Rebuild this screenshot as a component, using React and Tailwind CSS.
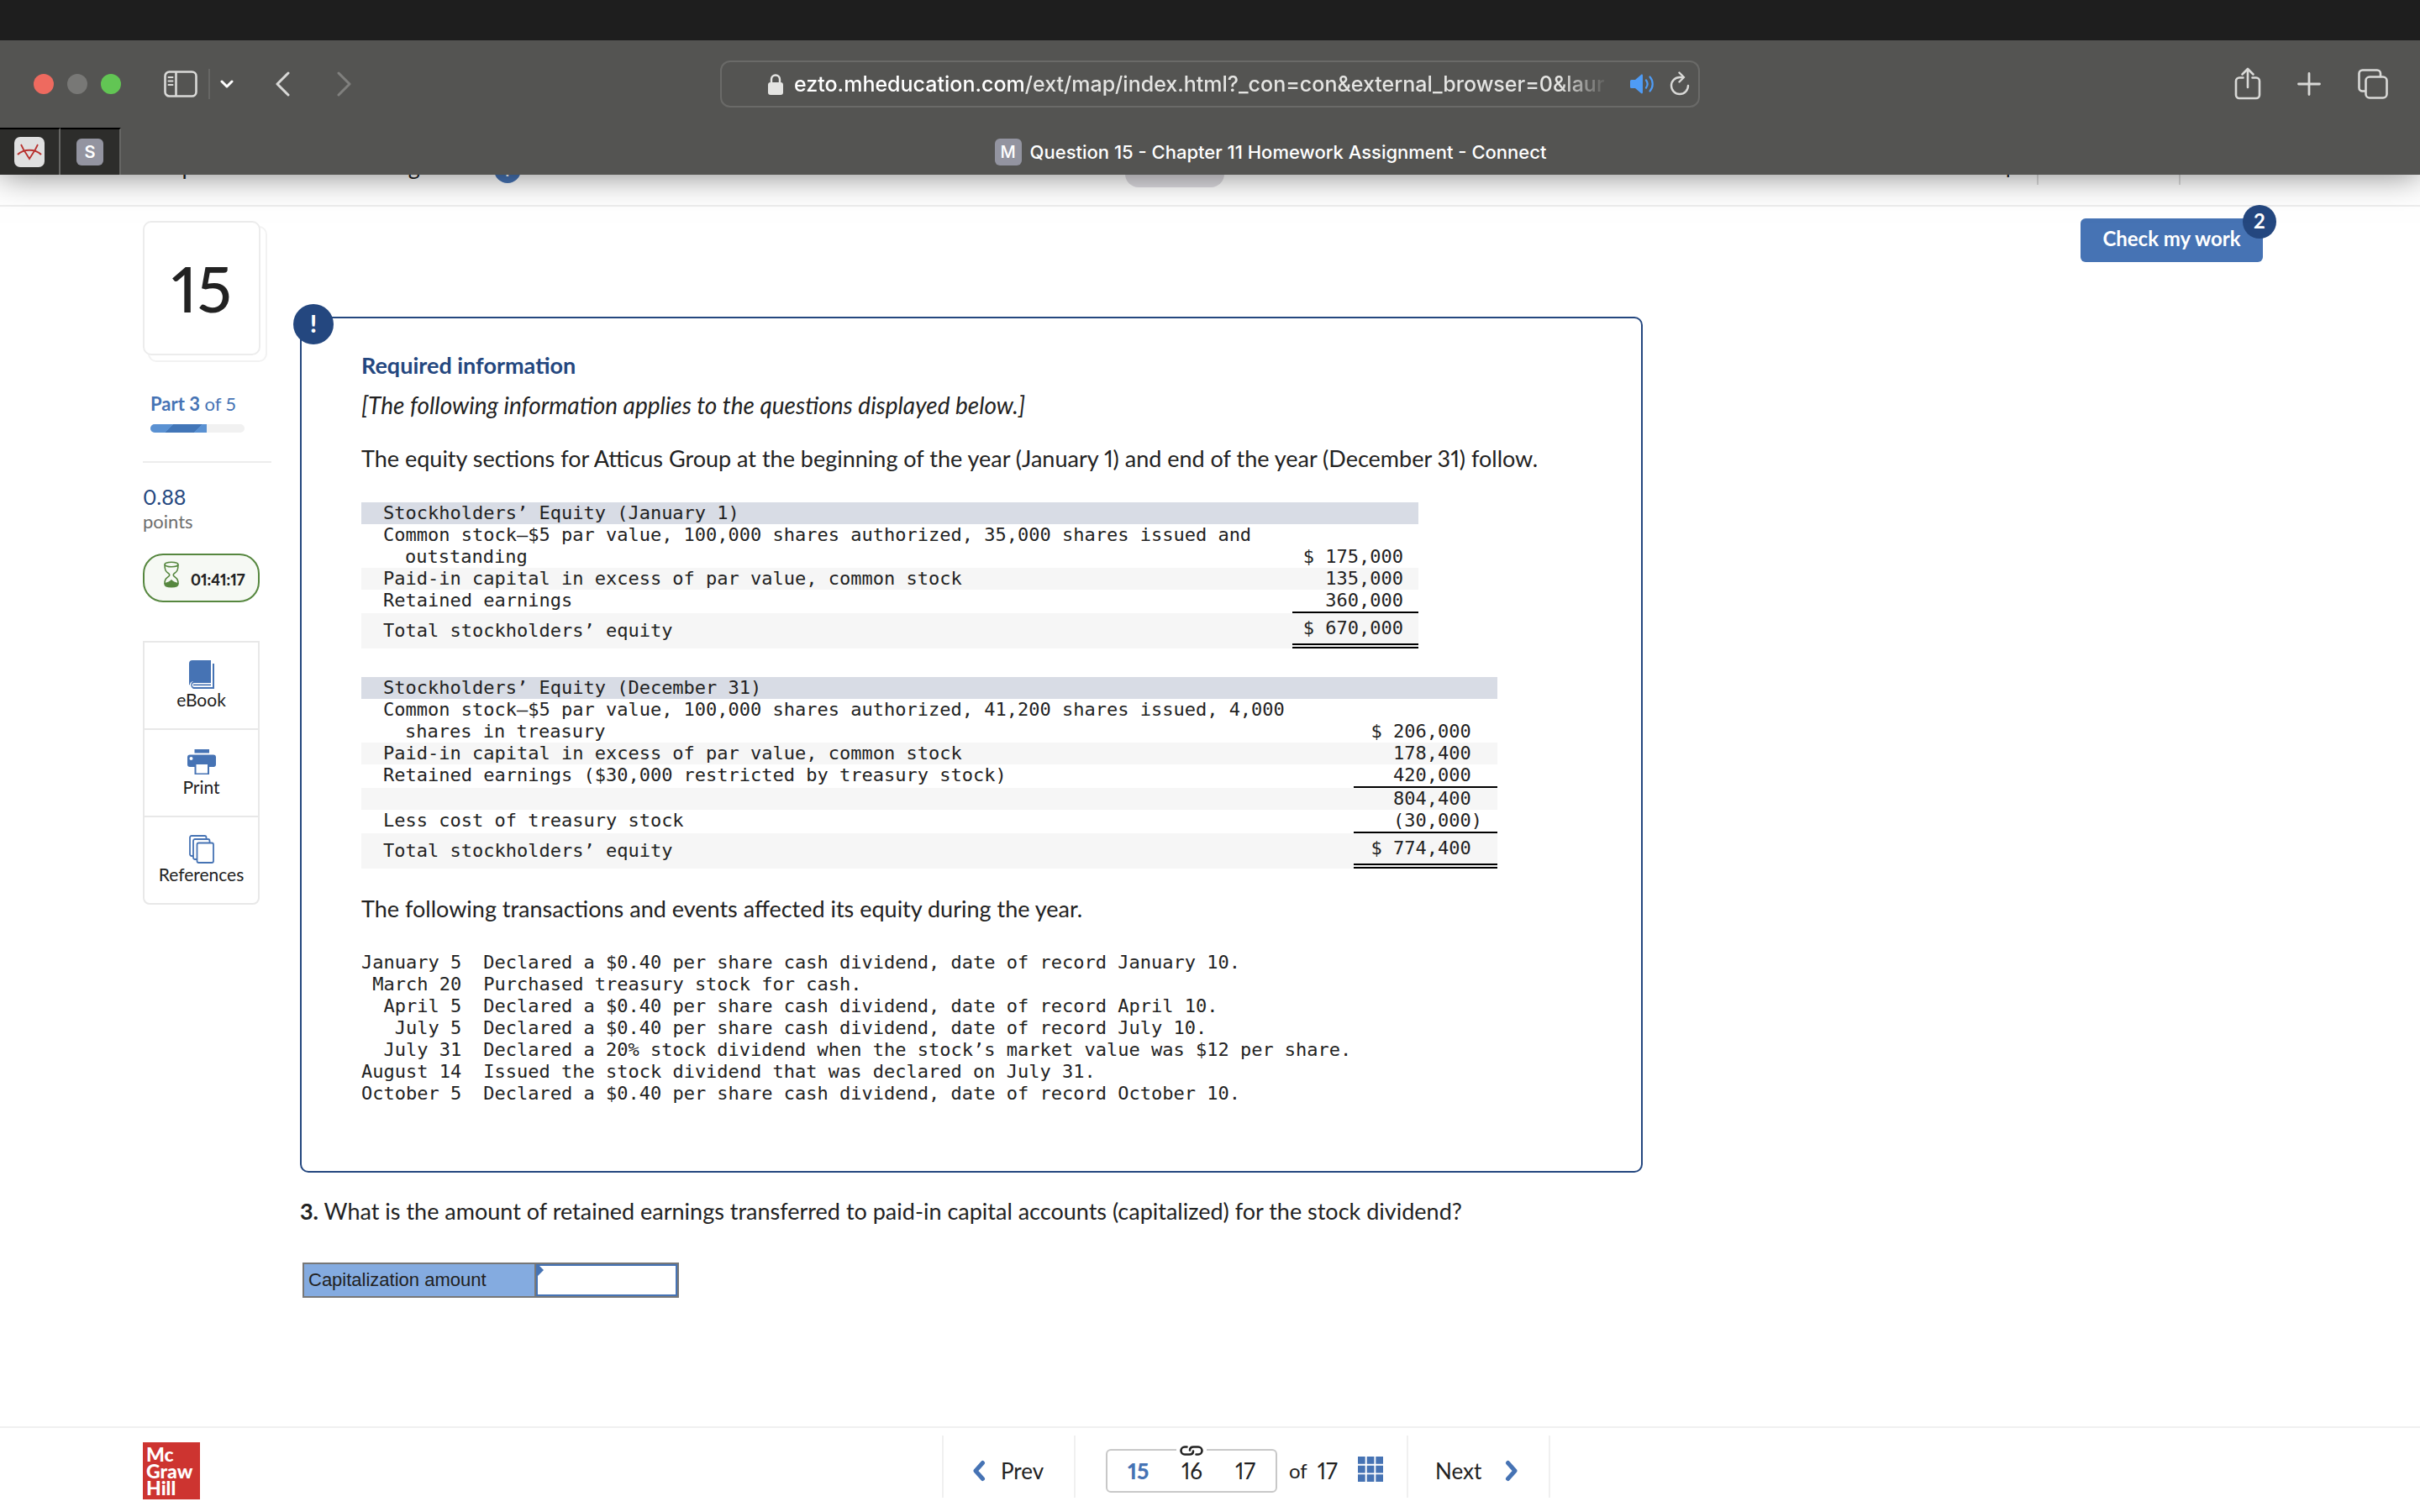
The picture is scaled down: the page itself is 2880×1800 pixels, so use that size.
import { useState } from "react";

const januaryRows = [
  { label: "Common stock—$5 par value, 100,000 shares authorized, 35,000 shares issued and outstanding", amount: "$ 175,000" },
  { label: "Paid-in capital in excess of par value, common stock", amount: "135,000", shaded: true },
  { label: "Retained earnings", amount: "360,000", rule: true },
  { label: "Total stockholders’ equity", amount: "$ 670,000", shaded: true, total: true },
];

// trailing nbsp keeps the digits lined up with the (30,000) row
const decemberRows = [
  { label: "Common stock—$5 par value, 100,000 shares authorized, 41,200 shares issued, 4,000 shares in treasury", amount: "$ 206,000\u00a0" },
  { label: "Paid-in capital in excess of par value, common stock", amount: "178,400\u00a0", shaded: true },
  { label: "Retained earnings ($30,000 restricted by treasury stock)", amount: "420,000\u00a0", rule: true },
  { label: "", amount: "804,400\u00a0", shaded: true },
  { label: "Less cost of treasury stock", amount: "(30,000)", rule: true },
  { label: "Total stockholders’ equity", amount: "$ 774,400\u00a0", shaded: true, total: true },
];

const transactions = [
  ["January 5", "Declared a $0.40 per share cash dividend, date of record January 10."],
  ["March 20", "Purchased treasury stock for cash."],
  ["April 5", "Declared a $0.40 per share cash dividend, date of record April 10."],
  ["July 5", "Declared a $0.40 per share cash dividend, date of record July 10."],
  ["July 31", "Declared a 20% stock dividend when the stock’s market value was $12 per share."],
  ["August 14", "Issued the stock dividend that was declared on July 31."],
  ["October 5", "Declared a $0.40 per share cash dividend, date of record October 10."],
];

const BrowserBar = () => (
  <div className="relative z-10 bg-[#545452] font-['Inter',sans-serif] text-white shadow-[0_0_38px_rgba(0,0,0,0.5)]">
    <div className="h-12 bg-[#1e1e1e]" />
    <div className="grid h-[104px] grid-cols-[1fr_1166px_1fr] items-center">
      <div className="flex items-center pl-10 text-[#d9d9d7]">
        <div className="flex gap-4">
          <span className="size-6 rounded-full bg-[#ee6a5f]" />
          <span className="size-6 rounded-full bg-[#787876]" />
          <span className="size-6 rounded-full bg-[#62c554]" />
        </div>
        <button aria-label="Show sidebar" className="ml-[51px]">
          <svg width="40" height="32" viewBox="0 0 40 32" fill="none" stroke="currentColor" strokeWidth="2.6">
            <rect x="1.5" y="1.5" width="37" height="29" rx="5" />
            <path d="M14.5 2v28" />
            <path d="M5.5 8h5M5.5 12.500h5M5.5 17h5" strokeWidth="2" strokeLinecap="round" />
          </svg>
        </button>
        <span className="ml-[13px] h-9 w-0.5 bg-[#666664]" />
        <button aria-label="Sidebar options" className="ml-3">
          <svg width="16" height="10" viewBox="0 0 16 10" fill="none" stroke="white" strokeWidth="3" strokeLinecap="round" strokeLinejoin="round">
            <path d="M2 2l6 6 6-6" />
          </svg>
        </button>
        <button aria-label="Back" className="ml-12">
          <svg width="20" height="30" viewBox="0 0 20 30" fill="none" stroke="currentColor" strokeWidth="3" strokeLinecap="round" strokeLinejoin="round">
            <path d="M17 2L4 15l13 13" />
          </svg>
        </button>
        <button aria-label="Forward" className="ml-[54px] text-[#80807e]">
          <svg width="20" height="30" viewBox="0 0 20 30" fill="none" stroke="currentColor" strokeWidth="3" strokeLinecap="round" strokeLinejoin="round">
            <path d="M3 2l13 13L3 28" />
          </svg>
        </button>
      </div>

      <div className="flex h-14 items-center rounded-xl border-2 border-[#6a6a68] pr-2.5 pl-[54px]">
        <svg width="20" height="26" viewBox="0 0 20 26" fill="#e4e4e2">
          <rect x="1" y="11" width="18" height="15" rx="3" />
          <path d="M5 12V7.500a5 5 0 0110 0V12" fill="none" stroke="#e4e4e2" strokeWidth="2.400" />
        </svg>
        <p className="ml-3 flex-1 overflow-hidden text-[25px] leading-9 font-medium whitespace-nowrap text-[#e4e4e2] [mask-image:linear-gradient(to_right,black_94%,transparent)]">
          <span className="text-white">ezto.mheducation.com</span>
          /ext/map/index.html?_con=con&amp;external_browser=0&amp;laur
        </p>
        <button aria-label="Mute tab" className="ml-6">
          <svg width="32" height="24" viewBox="0 0 32 24" fill="#4f9cf6">
            <path d="M1 8.500a1.500 1.500 0 011.500-1.500H7l7-6c1-.8 2-.3 2 1v20c0 1.300-1 1.800-2 1l-7-6H2.500A1.500 1.500 0 011 15.500z" />
            <path d="M20 7.500c2 2.700 2 6.300 0 9M24.500 3.500c4.300 5 4.300 12 0 17" fill="none" stroke="#4f9cf6" strokeWidth="2.200" strokeLinecap="round" />
          </svg>
        </button>
        <button aria-label="Reload" className="ml-4">
          <svg width="24" height="30" viewBox="0 0 24 30" fill="none" stroke="#d9d9d7" strokeWidth="2.400" strokeLinecap="round" strokeLinejoin="round">
            <path d="M22 17a10 10 0 11-10-10h4" />
            <path d="M11.500 1.500L17 7l-5.500 5.500" />
          </svg>
        </button>
      </div>

      <div className="flex items-center justify-end pr-[38px] text-[#d9d9d7]">
        <button aria-label="Share">
          <svg width="32" height="40" viewBox="0 0 32 40" fill="none" stroke="currentColor" strokeWidth="2.600" strokeLinecap="round" strokeLinejoin="round">
            <path d="M10.500 12.500H6a4 4 0 00-4 4V33a4 4 0 004 4h20a4 4 0 004-4V16.500a4 4 0 00-4-4h-4.500" />
            <path d="M16 24V2.500M9.500 8.500L16 2l6.500 6.500" />
          </svg>
        </button>
        <button aria-label="New tab" className="ml-[43px]">
          <svg width="28" height="28" viewBox="0 0 28 28" fill="none" stroke="currentColor" strokeWidth="2.800" strokeLinecap="round">
            <path d="M14 1.500v25M1.500 14h25" />
          </svg>
        </button>
        <button aria-label="Show all tabs" className="ml-11">
          <svg width="36" height="36" viewBox="0 0 36 36" fill="none" stroke="currentColor" strokeWidth="2.600" strokeLinejoin="round">
            <rect x="9.500" y="9.500" width="25" height="25" rx="4.500" />
            <path d="M9 26.500H5.500a4 4 0 01-4-4v-17a4 4 0 014-4h17.500a4 4 0 014 4V9" />
          </svg>
        </button>
      </div>
    </div>

    <div className="flex h-14">
      <button aria-label="Pinned tab" className="flex w-[72px] items-center justify-center border-t-2 border-r-2 border-t-black border-r-[#666664] bg-[#2d2d2b]">
        <svg width="36" height="36" viewBox="0 0 36 36" fill="none" stroke="#b8322f" strokeWidth="1.800">
          <rect width="36" height="36" rx="7" fill="#e0e0e0" stroke="none" />
          <path d="M8 9l3 6 7 11 7-11 3-6" />
          <path d="M4 21c7-7 21-7 28 0" strokeWidth="2.200" />
        </svg>
      </button>
      <button aria-label="Pinned tab S" className="flex w-[72px] items-center justify-center border-t-2 border-r-2 border-t-black border-r-[#666664] bg-[#2d2d2b]">
        <span className="flex size-8 items-center justify-center rounded-md bg-[#9394a0] text-xl font-semibold">S</span>
      </button>
      <div className="flex flex-1 items-center justify-center gap-2.5 pt-0.5 text-[22px] font-medium">
        <span className="flex size-8 items-center justify-center rounded-md bg-[#9394a0] text-xl">M</span>
        Question 15 - Chapter 11 Homework Assignment - Connect
      </div>
    </div>
  </div>
);

// scrolled mostly under the browser bar
const AssignmentHeader = () => (
  <header className="-mt-[62px] flex h-[100px] border-b-2 border-[#ededed] bg-white pr-[187px] pl-[170px] text-[27px] leading-8">
    <div className="flex w-[1169px] items-start gap-3 pt-9">
      <span>Chapter 11 Homework Assignment</span>
      <span className="mt-1 flex size-8 items-center justify-center rounded-full bg-[#4673b4] text-xl font-bold text-white">i</span>
    </div>
    <span className="mt-5 h-[57px] w-[118px] rounded-2xl bg-[#dddbe0]" />
    <div className="flex flex-1 items-start justify-end pt-9 text-2xl">
      <span className="pr-6">Help</span>
      <span className="h-[38px] border-x-2 border-[#dddddd] px-6">Save &amp; Exit</span>
      <span className="pl-6">Submit</span>
    </div>
  </header>
);

const SideLink = ({ label, children, last }) => (
  <a
    href="#"
    className={`flex flex-col items-center border-2 border-[#e8e8e8] pt-5 text-[21px] leading-6 ${last ? "h-[106px] rounded-b-lg" : "h-[104px] border-b-0"}`}
  >
    <span className="flex h-9 items-center text-[#4673b4]">{children}</span>
    <span>{label}</span>
  </a>
);

const Sidebar = () => (
  <aside className="w-[153px] shrink-0">
    <div className="relative mr-[13px] h-40">
      <div className="absolute top-1.5 left-1.5 h-[162px] w-[142px] rounded-[10px] border-2 border-[#f2f2f2]" />
      <div className="relative flex h-40 items-center justify-center rounded-[10px] border-2 border-[#ececec] bg-white text-[76px] font-medium">
        15
      </div>
    </div>
    <div className="px-[9px] pt-[42px] text-[22px] leading-8 text-[#4673b4]">
      <strong>Part 3</strong> of 5
      <div className="mt-2 h-2.5 w-28 overflow-hidden rounded-full bg-[#f1f1f1]">
        <div className="h-full w-3/5 bg-[linear-gradient(135deg,#5a91d2_36%,#4276b8_36%,#4276b8_80%,#5a91d2_80%)]" />
      </div>
    </div>
    <hr className="mt-[34px] border-t-2 border-[#ececec]" />
    <p className="mt-6 text-[25px] leading-8 text-[#24477f]">0.88</p>
    <p className="text-[22px] leading-7 text-[#6e6e6e]">points</p>
    <div className="mt-6 mr-3.5 flex h-[58px] items-center gap-3.5 rounded-3xl border-2 border-[#56873f] bg-[#f6f9f4] pl-[23px]">
      <svg width="18" height="32" viewBox="0 0 18 32" className="mb-2 shrink-0" fill="none" stroke="#56873f" strokeWidth="1.600">
        <ellipse cx="9" cy="4" rx="8" ry="2.800" />
        <path d="M1 4c0 7 1 8 5 11 1 .8 1 2 0 2.800C2 21 1 22 1 27M17 4c0 7-1 8-5 11-1 .8-1 2 0 2.800 4 3.200 5 4.200 5 9.200" />
        <path d="M1 27c0 5 16 5 16 0-3-1-6-2-8-4-2 2-5 3-8 4z" fill="#56873f" />
      </svg>
      <strong className="pt-1 text-lg leading-6 font-black">01:41:17</strong>
    </div>
    <nav className="mt-[46px] mr-3.5">
      <SideLink label="eBook">
        <svg width="30" height="34" viewBox="0 0 30 34" fill="currentColor">
          <path d="M4 0h22v25H6c-4 0-5 2.500-5 4.500L0 29V4a4 4 0 014-4z" />
          <path d="M28 4h2v30H5a5 5 0 010-9h21v2H6c-3 0-3 5 0 5h22z" />
          <path d="M5 28.500h21v1.700H5z" />
        </svg>
      </SideLink>
      <SideLink label="Print">
        <svg width="34" height="30" viewBox="0 0 34 30" fill="currentColor">
          <path d="M8.500 0h17.500v4.500H8.500z" />
          <path d="M3 6.500h28a3 3 0 013 3V18a3 3 0 01-3 3h-5v9H8.500v-9H3a3 3 0 01-3-3V9.500a3 3 0 013-3z" />
          <path d="M10.500 18h13.500v10.500H10.500z" fill="white" />
          <circle cx="4.500" cy="11" r="2" fill="white" />
        </svg>
      </SideLink>
      <SideLink label="References" last>
        <svg width="30" height="34" viewBox="0 0 30 34" fill="white" stroke="currentColor" strokeWidth="1.800">
          <rect x="1" y="1" width="19.500" height="24" rx="2" />
          <rect x="5" y="5" width="19.500" height="24" rx="2" />
          <rect x="9.500" y="9.500" width="19.500" height="23.500" rx="2" />
        </svg>
      </SideLink>
    </nav>
  </aside>
);

const EquityTable = ({ title, rows, className, labelWidth, amountWidth }) => (
  <table className={`border-separate border-spacing-0 font-['DejaVu_Sans_Mono',monospace] text-[22px] leading-[26px] ${className}`}>
    <thead>
      <tr className="bg-[#d8dce5]">
        <th colSpan="2" className="p-0 pl-[26px] text-left font-normal">{title}</th>
      </tr>
    </thead>
    <tbody>
      {rows.map((row, index) => (
        <tr key={index} className={row.shaded ? "bg-[#f6f6f6]" : ""}>
          <td className={`p-0 pl-[52px] align-middle -indent-[26px] ${labelWidth} ${row.rule ? "pb-0.5" : ""}`}>{row.label}</td>
          <td
            className={`p-0 pr-[18px] text-right whitespace-nowrap ${amountWidth} ${
              row.total ? "h-[42px] border-b-[6px] border-double border-black align-middle" : "align-bottom"
            } ${row.rule ? "border-b-2 border-black" : ""}`}
          >
            {row.amount}
          </td>
        </tr>
      ))}
    </tbody>
  </table>
);

const Footer = () => (
  <footer className="relative flex h-[102px] justify-center border-t-2 border-[#f0f0f0] pt-[9px] text-[26px]">
    <p className="absolute top-[17px] left-[170px] size-[68px] bg-[#cd3430] pt-1 pl-1 text-[23px] leading-5 font-black text-white">
      Mc
      <br />
      Graw
      <br />
      Hill
    </p>
    <nav className="ml-[86px] flex h-[74px] items-center divide-x-2 divide-[#f0f0f0] border-x-2 border-[#f0f0f0] leading-8">
      <button className="flex h-full w-[157px] items-center gap-[18px] pt-2.5 pl-[34px]">
        <svg width="16" height="26" viewBox="0 0 16 26" fill="none" stroke="#4673b4" strokeWidth="5" strokeLinecap="round" strokeLinejoin="round">
          <path d="M12.500 3.500L4 13l8.500 9.500" />
        </svg>
        Prev
      </button>
      <div className="flex h-full w-[396px] items-center pt-2.5 pl-9">
        <div className="relative flex h-[52px] w-[204px] items-center justify-between rounded-md border-2 border-[#c8c8c8] px-6">
          <button className="font-black text-[#4673b4]">15</button>
          <button>16</button>
          <button>17</button>
          <span className="absolute -top-[6px] left-[82px] bg-white px-1">
            <svg width="28" height="12" viewBox="0 0 28 12" fill="none" stroke="#222" strokeWidth="2.600" strokeLinecap="round">
              <path d="M8.500 1.500H6a4.500 4.500 0 000 9h5.500c3 0 4.500-1.700 4.500-4" />
              <path d="M19.500 10.500H22a4.500 4.500 0 000-9h-5.500c-3 0-4.500 1.700-4.500 4" />
            </svg>
          </span>
        </div>
        <span className="ml-3.5 flex items-center gap-3">
          <span className="text-2xl">of</span> 17
        </span>
        <button aria-label="Question list" className="mb-1 ml-6">
          <svg width="30" height="30" viewBox="0 0 30 30" fill="#4673b4">
            <path d="M0 0h8.700v8.700H0zM10.700 0h8.700v8.700h-8.700zM21.300 0H30v8.700h-8.700zM0 10.700h8.700v8.700H0zM10.700 10.700h8.700v8.700h-8.700zM21.300 10.700H30v8.700h-8.700zM0 21.300h8.700V30H0zM10.700 21.300h8.700V30h-8.700zM21.300 21.300H30V30h-8.700z" />
          </svg>
        </button>
      </div>
      <button className="flex h-full w-[167px] items-center gap-7 pt-2.5 pl-8">
        Next
        <svg width="16" height="26" viewBox="0 0 16 26" fill="none" stroke="#4673b4" strokeWidth="5" strokeLinecap="round" strokeLinejoin="round">
          <path d="M3.500 3.500L12 13l-8.500 9.500" />
        </svg>
      </button>
    </nav>
  </footer>
);

const App = () => {
  const [amount, setAmount] = useState("");

  return (
    <div className="flex min-h-screen flex-col bg-white font-['Lato',sans-serif] text-[#222222] proportional-nums">
      <BrowserBar />
      <AssignmentHeader />

      <main className="flex flex-1 items-start pt-[17px] pr-[187px] pl-[170px]">
        <Sidebar />

        <section className="mt-[114px] ml-[34px] max-w-[1598px] flex-1 text-[27px] leading-10">
          <div className="relative rounded-[10px] border-2 border-[#24477f] pt-9 pr-10 pb-[79px] pl-[71px]">
            <span className="absolute -top-[17px] -left-2.5 flex size-12 items-center justify-center rounded-full bg-[#24477f] pb-0.5 text-[28px] font-black text-white">
              !
            </span>
            <h2 className="font-bold text-[#24477f]">Required information</h2>
            <p className="mt-[7px] text-[28px] italic">[The following information applies to the questions displayed below.]</p>
            <p className="mt-6">
              The equity sections for Atticus Group at the beginning of the year (January 1) and end of the year (December 31) follow.
            </p>

            <EquityTable
              title="Stockholders’ Equity (January 1)"
              rows={januaryRows}
              className="mt-8"
              labelWidth="w-[1108px]"
              amountWidth="w-[150px]"
            />
            <EquityTable
              title="Stockholders’ Equity (December 31)"
              rows={decemberRows}
              className="mt-[34px]"
              labelWidth="w-[1181px]"
              amountWidth="w-[171px]"
            />

            <p className="mt-7">The following transactions and events affected its equity during the year.</p>
            <table className="mt-[31px] font-['DejaVu_Sans_Mono',monospace] text-[22px] leading-[26px]">
              <tbody>
                {transactions.map(([date, text]) => (
                  <tr key={date}>
                    <td className="p-0 pr-[26px] text-right">{date}</td>
                    <td className="p-0">{text}</td>
                  </tr>
                ))}
              </tbody>
            </table>
          </div>

          <p className="mt-[26px]">
            <strong>3.</strong> What is the amount of retained earnings transferred to paid-in capital accounts (capitalized) for the stock dividend?
          </p>
          <div className="mt-[41px] ml-[3px] flex h-[42px] w-[448px] border-2 border-[#777777] font-['Liberation_Sans',sans-serif] text-[22px] leading-[38px]">
            <label htmlFor="capitalization" className="w-[276px] border-r-2 border-[#777777] bg-[#84abe0] pl-[5px]">
              Capitalization amount
            </label>
            <div className="relative flex-1">
              <input
                id="capitalization"
                value={amount}
                onChange={(e) => setAmount(e.target.value)}
                className="block h-full w-full border-2 border-[#4673b4] px-3 outline-none"
              />
              <svg width="9" height="14" viewBox="0 0 9 14" fill="#4673b4" className="absolute top-0 left-0">
                <path d="M0 0h2l7 7-7 7H0z" />
              </svg>
            </div>
          </div>
        </section>

        <div className="relative -mt-[3px] ml-auto">
          <button className="h-[52px] w-[217px] rounded-md bg-[#4673b4] pb-1 text-2xl font-bold text-white">Check my work</button>
          <span className="absolute -top-4 -right-4 flex size-10 items-center justify-center rounded-full bg-[#24477f] pb-0.5 text-2xl font-bold text-white">
            2
          </span>
        </div>
      </main>

      <Footer />
    </div>
  );
};

export default App;
